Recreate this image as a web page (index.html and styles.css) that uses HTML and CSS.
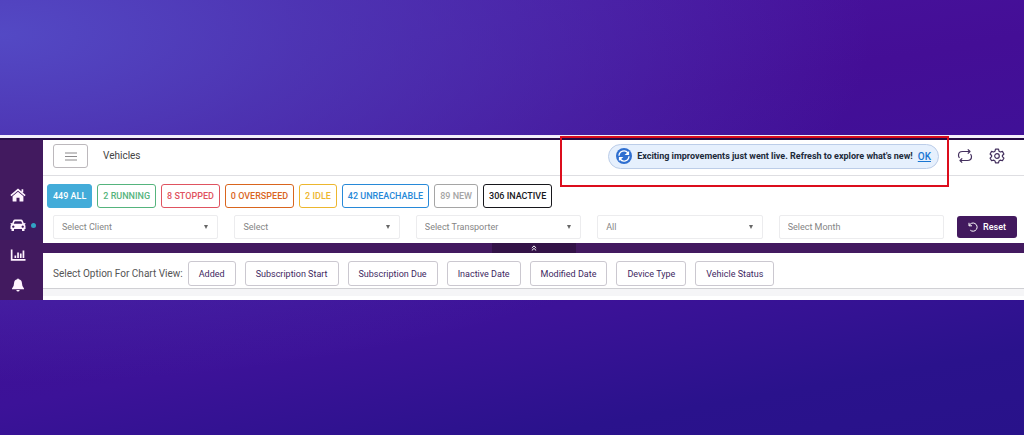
FILE: index.html
```html
<!DOCTYPE html>
<html lang="en">
<head>
<meta charset="utf-8">
<title>Vehicles</title>
<meta name="viewport" content="width=device-width, initial-scale=1">
<link rel="stylesheet" href="styles.css">
</head>
<body class="stage">
<div class="app">
  <nav class="sidebar" aria-label="Main">
    <a class="side-link" href="#home" aria-label="Home"><svg class="side-icon" viewBox="0 0 16 14"><path d="M8 3.7 2.6 8.2V13q0 .6.6.6h3.3V9.8h3v3.8h3.3q.6 0 .6-.6V8.2z"/><path d="M.9 7.6 8 1.6l7.1 6M12.4 1.2v3" fill="none" stroke="currentColor" stroke-width="1.7"/></svg></a>
    <a class="side-link active" href="#vehicles" aria-label="Vehicles"><svg class="side-icon" viewBox="0 0 16 14"><path fill-rule="evenodd" d="M5 1.5h6q1.3 0 1.8 1.2l1 2.5 1.6-.2v1.2l-.8.3q.9.7.9 1.8V11h-1v1.4q0 .6-.6.6h-1.3q-.6 0-.6-.6V11H4v1.4q0 .6-.6.6H2.100q-.6 0-.6-.6V11h-1V8.300q0-1.100.9-1.800l-.8-.3V5l1.600.2 1-2.500Q3.700 1.500 5 1.500zm.2 1.700q-.5 0-.7.5l-.8 2h8.600l-.8-2q-.2-.5-.7-.5zM3.300 7.400a1.150 1.150 0 1 0 .01 0zm9.400 0a1.150 1.150 0 1 0 .01 0z"/></svg></a>
    <a class="side-link" href="#reports" aria-label="Reports"><svg class="side-icon" viewBox="0 0 16 14"><path d="M.8 1.500h1.700v9.500h13v1.700H.8zM4.500 7.500h1.700v2.500H4.500zM7.200 4.500h1.700V10H7.200zM9.900 5.500h1.700V10H9.900zM12.600 2.500h1.700V10h-1.700z"/></svg></a>
    <a class="side-link" href="#alerts" aria-label="Alerts"><svg class="side-icon" viewBox="0 0 16 14"><path d="M8 .4q.8 0 .8.900 3 .6 3.200 4.200 0 3.200 2 5v.8H2v-.8q2-1.800 2-5Q4.200 1.900 7.200 1.300 7.200.4 8 .4zM6.300 12h3.400q-.3 1.600-1.700 1.600T6.300 12z"/></svg></a>
  </nav>
  <main class="main">
    <header class="header">
      <button class="menu-button" type="button" aria-label="Toggle menu"><svg class="menu-icon" viewBox="0 0 12 9"><path d="M0 1h12M0 4.500h12M0 8h12"/></svg></button>
      <h1 class="title">Vehicles</h1>
      <div class="highlight">
        <div class="notice" role="status">
          <svg class="notice-icon" viewBox="0 0 16 16"><circle cx="8" cy="8" r="8" fill="#2f6fd0"/><path d="M3 7.800A5 5 0 0 1 12 5M13 8.200A5 5 0 0 1 4 11" fill="none" stroke="#fff" stroke-width="1.300"/><path d="M13.100 3v4H8.600zM2.900 13V9h4.500z" fill="#fff"/></svg>
          <span class="notice-text">Exciting improvements just went live. Refresh to explore what's new!</span>
          <a class="notice-link" href="#refresh">OK</a>
        </div>
      </div>
      <div class="actions">
        <button class="icon-button" type="button" aria-label="Switch"><svg class="action-icon" viewBox="0 0 16 16"><path d="M10.800 1.300 13 3.500l-2.200 2.200M13 3.500H5.500Q1.500 3.500 1.500 7.200 1.500 8.700 2.500 9.900M5.200 14.700 3 12.500l2.200-2.200M3 12.500h7.500q4 0 4-3.700 0-1.500-1-2.700"/></svg></button>
        <button class="icon-button" type="button" aria-label="Settings"><svg class="action-icon" viewBox="0 0 16 16"><path d="M6.500 1.200h3l.5 2 1.400.8 2-.6 1.500 2.600L13.400 7.500v1.100l1.500 1.500-1.500 2.600-2-.6-1.400.8-.5 2h-3l-.5-2-1.400-.8-2 .6-1.500-2.600 1.500-1.500V7.500L1.100 6l1.500-2.600 2 .6L6 3.200z"/><circle cx="8" cy="8" r="2.300"/></svg></button>
      </div>
    </header>
    <section class="filters" aria-label="Filters">
      <div class="chips">
        <button class="chip all" type="button">449 ALL</button>
        <button class="chip running" type="button">2 RUNNING</button>
        <button class="chip stopped" type="button">8 STOPPED</button>
        <button class="chip overspeed" type="button">0 OVERSPEED</button>
        <button class="chip idle" type="button">2 IDLE</button>
        <button class="chip unreachable" type="button">42 UNREACHABLE</button>
        <button class="chip new" type="button">89 NEW</button>
        <button class="chip inactive" type="button">306 INACTIVE</button>
      </div>
      <form class="fields">
        <label class="field"><select class="control" aria-label="Client"><option>Select Client</option></select><span class="caret"></span></label>
        <label class="field"><select class="control" aria-label="Group"><option>Select</option></select><span class="caret"></span></label>
        <label class="field"><select class="control" aria-label="Transporter"><option>Select Transporter</option></select><span class="caret"></span></label>
        <label class="field"><select class="control" aria-label="Status"><option>All</option></select><span class="caret"></span></label>
        <label class="field"><input class="control" type="text" placeholder="Select Month" aria-label="Month"></label>
        <button class="reset" type="reset"><svg class="reset-icon" viewBox="0 0 10 10"><path d="M1 .8v3h3M1.200 3.600A4.100 4.100 0 1 1 2.300 8.200"/></svg>Reset</button>
      </form>
    </section>
    <div class="divider"><button class="collapse" type="button" aria-label="Collapse filters"><svg class="collapse-icon" viewBox="0 0 6 6"><path d="M.8 3 3 .9 5.200 3M.8 5.500 3 3.400l2.200 2.100"/></svg></button></div>
    <section class="chart-options" aria-label="Chart view">
      <span class="chart-label">Select Option For Chart View:</span>
      <div class="options">
        <button class="option" type="button">Added</button>
        <button class="option" type="button">Subscription Start</button>
        <button class="option" type="button">Subscription Due</button>
        <button class="option" type="button">Inactive Date</button>
        <button class="option" type="button">Modified Date</button>
        <button class="option" type="button">Device Type</button>
        <button class="option" type="button">Vehicle Status</button>
      </div>
    </section>
    <div class="content"></div>
  </main>
</div>
</body>
</html>
```
FILE: styles.css
```css
* { box-sizing: border-box; }

.stage {
  margin: 0;
  min-height: 100vh;
  display: flex;
  flex-direction: column;
  justify-content: center;
  background:
    radial-gradient(ellipse 85% 80% at 0% 8%, rgba(84, 76, 198, 0.95), rgba(80, 66, 188, 0.7) 35%, rgba(76, 50, 176, 0) 100%),
    linear-gradient(170deg, #4a16a2 0%, #440e96 35%, #3c1298 66%, #2a128c 86%, #28128a 100%);
  font-family: Roboto, "Liberation Sans", sans-serif;
}

button, input, select { font: inherit; margin: 0; }

.app {
  display: flex;
  border-top: 3px solid #f4effb;
  background: #421a5f;
}

.sidebar {
  width: 43px;
  flex: none;
  display: flex;
  flex-direction: column;
  justify-content: flex-end;
  border-top: 2px solid #250b44;
}

.side-link {
  height: 30px;
  display: flex;
  align-items: center;
  gap: 5px;
  padding-left: 10px;
  color: #fff4ff;
}

.side-link.active { background: #3d1b60; }

.side-link.active::after {
  content: "";
  width: 5px;
  height: 5px;
  border-radius: 50%;
  background: #31a3c4;
}

.side-icon { width: 16px; height: 14px; fill: currentColor; }

.main { flex: 1; min-width: 0; border-top: 2px solid #250b44; }

.header {
  height: 36px;
  display: flex;
  align-items: center;
  padding: 0 19px 3px 10px;
  background: #fff;
  border-bottom: 1px solid #dedee2;
}

.menu-button {
  width: 35px;
  height: 24px;
  display: grid;
  place-items: center;
  padding: 0;
  border: 1px solid #bcb8bc;
  border-radius: 3px;
  background: #fff;
}

.menu-icon { width: 12px; height: 9px; stroke: #8c8a8c; fill: none; }

.title {
  margin: 0 auto 0 15px;
  font-size: 10px;
  line-height: 16px;
  font-weight: 400;
  color: #444;
}

/* Frame around the notice; it hangs below the header over the filters. */
.highlight {
  position: relative;
  padding: 0 10px 0 48px;
}

.highlight::before {
  content: "";
  position: absolute;
  inset: -8px 0 -18px;
  border: 2px solid #dc0d1c;
  pointer-events: none;
}

.notice {
  height: 25px;
  display: flex;
  align-items: center;
  padding: 0 7px;
  border: 1px solid #bccde8;
  border-radius: 13px;
  background: #e6f0fd;
  font-size: 9px;
  font-weight: 700;
  color: #202a3a;
  white-space: nowrap;
}

.notice-icon { width: 16px; height: 16px; margin-right: 5px; }
.notice-link { margin-left: 5px; font-size: 10px; font-weight: 500; color: #1976d2; }

.actions { display: flex; gap: 16px; padding-left: 8px; }

.icon-button {
  width: 16px;
  height: 16px;
  padding: 0;
  border: 0;
  background: none;
}

.action-icon {
  display: block;
  width: 16px;
  height: 16px;
  fill: none;
  stroke: #44305e;
  stroke-width: 1.2;
  stroke-linejoin: round;
}

.filters { background: #fff; padding: 8px 7px 4px 4px; }
.chips { display: flex; gap: 5px; }

.chip {
  height: 24px;
  padding: 0 5px;
  border: 1px solid currentColor;
  border-radius: 3px;
  background: #fff;
  font-size: 9px;
  font-weight: 500;
  white-space: nowrap;
}

.all { background: #43acd9; border-color: #43acd9; color: #fff; }
.running { color: #55b47d; }
.stopped { color: #df5360; }
.overspeed { color: #d9651e; }
.idle { color: #edb62e; }
.unreachable { color: #2789d8; }
.new { color: #a5a5a5; }
.inactive { color: #17171c; }

.fields {
  display: flex;
  align-items: center;
  gap: 16px;
  margin-top: 7px;
  padding-left: 6px;
}

.field { position: relative; flex: 1; min-width: 0; }

.control {
  display: block;
  width: 100%;
  height: 24px;
  padding: 0 8px;
  appearance: none;
  border: 1px solid #ececee;
  border-radius: 2px;
  background: #fff;
  font-size: 9px;
  color: #858585;
}

.control::placeholder { color: #858585; opacity: 1; }

.caret {
  position: absolute;
  right: 10px;
  top: 10px;
  border: 2px solid transparent;
  border-top: 4px solid #666;
  border-bottom: 0;
  pointer-events: none;
}

.reset {
  display: flex;
  align-items: center;
  justify-content: center;
  gap: 5px;
  width: 60px;
  height: 22px;
  margin-left: -3px;
  padding: 0;
  border: 0;
  border-radius: 3px;
  background: #42195e;
  font-size: 9px;
  font-weight: 500;
  color: #fff;
}

.reset-icon { width: 10px; height: 10px; fill: none; stroke: currentColor; }

.divider { display: flex; justify-content: center; height: 10px; background: #431a60; }

.collapse {
  width: 84px;
  padding: 0;
  display: grid;
  place-items: center;
  border: 0;
  background: #331347;
}

.collapse-icon { width: 6px; height: 6px; fill: none; stroke: #fff; }

.chart-options {
  display: flex;
  align-items: center;
  gap: 5px;
  padding: 8px 10px 2px;
  background: #fff;
  border-bottom: 1px solid #d0d0d4;
}

.chart-label { font-size: 10px; color: #555; white-space: nowrap; }
.options { display: flex; gap: 9px; }

.option {
  height: 25px;
  padding: 0 10px;
  border: 1px solid #cbc8d0;
  border-radius: 3px;
  background: #fff;
  font-size: 9px;
  color: #3e285f;
  white-space: nowrap;
}

.content { height: 11px; background: #f5f5f7; border-bottom: 4px solid #fff; }
```
